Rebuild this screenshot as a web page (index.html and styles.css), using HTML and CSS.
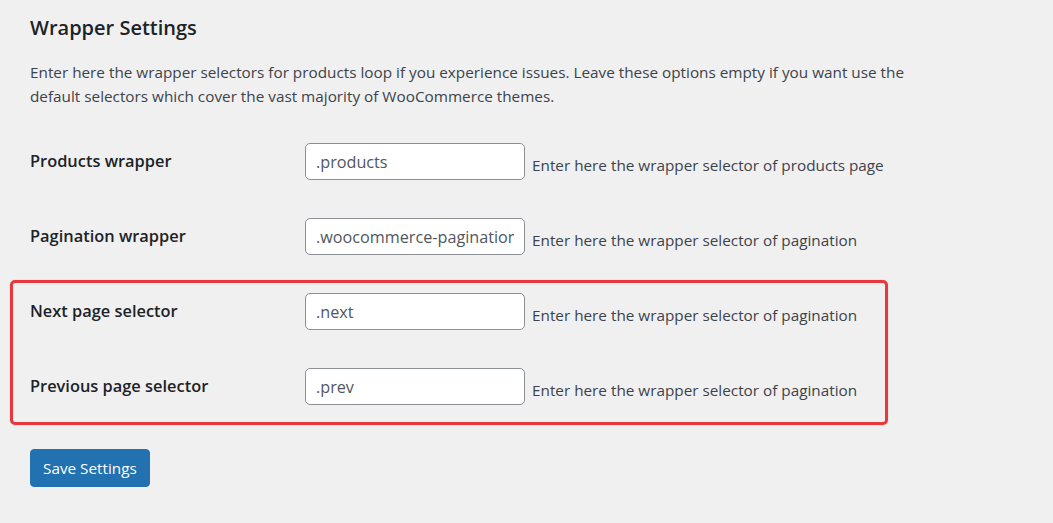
FILE: index.html
```html
<!DOCTYPE html>
<html lang="en">
<head>
	<meta charset="UTF-8">
	<title>Wrapper Settings</title>
	<link rel="stylesheet" href="styles.css">
</head>
<body>
	<div class="wrap">
		<h2 class="title">Wrapper Settings</h2>
		<p class="intro">Enter here the wrapper selectors for products loop if you experience issues. Leave these options empty if you want use the default selectors which cover the vast majority of WooCommerce themes.</p>

		<div class="form">
			<div class="row">
				<label class="label" for="products">Products wrapper</label>
				<div class="field">
					<input class="text" id="products" type="text" value=".products">
					<span class="description">Enter here the wrapper selector of products page</span>
				</div>
			</div>
			<div class="row">
				<label class="label" for="pagination">Pagination wrapper</label>
				<div class="field">
					<input class="text" id="pagination" type="text" value=".woocommerce-pagination">
					<span class="description">Enter here the wrapper selector of pagination</span>
				</div>
			</div>
			<div class="group">
				<div class="highlight"></div>
				<div class="row">
					<label class="label" for="next">Next page selector</label>
					<div class="field">
						<input class="text" id="next" type="text" value=".next">
						<span class="description">Enter here the wrapper selector of pagination</span>
					</div>
				</div>
				<div class="row">
					<label class="label" for="prev">Previous page selector</label>
					<div class="field">
						<input class="text" id="prev" type="text" value=".prev">
						<span class="description">Enter here the wrapper selector of pagination</span>
					</div>
				</div>
			</div>
		</div>

		<p class="submit"><button class="button" type="button">Save Settings</button></p>
	</div>
</body>
</html>
```

FILE: styles.css
```css
*{
	padding:0;
	margin:0;
	box-sizing:border-box;
}
body{
	background:#f0f0f1;
	color:#3c434a;
	font-family:"Open Sans","Noto Sans",sans-serif;
	font-size:15.3px;
	line-height:1.5;
}
.wrap{
	padding:15px 30px 0;
}
.title{
	font-size:20px;
	font-weight:600;
	line-height:1.3;
	color:#1d2327;
}
.intro{
	margin-top:19px;
	max-width:900px;
	line-height:24px;
}
.form{
	margin-top:16px;
}
.group{
	position:relative;
}
.highlight{
	position:absolute;
	left:-20px;
	top:6px;
	width:878px;
	height:145px;
	border:3px solid #e8383d;
	border-radius:5px;
	box-shadow:0 0 1px rgba(0,0,0,.35);
	pointer-events:none;
}
.row{
	display:flex;
	height:75px;
}
.label{
	width:275px;
	padding-top:26px;
	font-size:16.4px;
	font-weight:600;
	line-height:1.3;
	color:#1d2327;
}
.field{
	display:flex;
	align-items:flex-start;
	padding-top:19px;
}
.text{
	width:220px;
	height:37px;
	padding:0 10px;
	border:1px solid #8c8f94;
	border-radius:5px;
	background:#fff;
	font-family:inherit;
	font-size:16.2px;
	color:#50575e;
	outline:none;
}
.description{
	margin-left:7px;
	margin-top:10px;
	line-height:24px;
}
.submit{
	margin-top:25px;
}
.button{
	height:38px;
	padding:0 12px;
	border:1px solid #2271b1;
	border-radius:4px;
	background:#2271b1;
	color:#fff;
	font-family:inherit;
	font-size:15.3px;
}
```
